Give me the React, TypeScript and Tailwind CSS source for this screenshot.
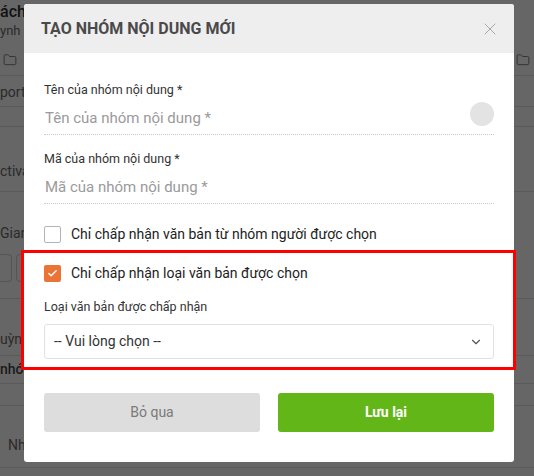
import { ChevronDown, Folder, X, Check } from "lucide-react";

const font = { fontFamily: "Roboto, 'Noto Sans', sans-serif" };

function Backdrop() {
  // dimmed page behind the modal
  return (
    <div className="flex h-[476px] w-[534px] flex-col bg-[#666666] text-[#1c1c1c]">
      <div className="h-[76px] border-b border-[#5a5a5a] pt-[2px]">
        <div className="text-[16px] font-medium leading-[20px] text-[#111]">ách l</div>
        <div className="text-[13px] leading-[18px] text-[#2a2a2a]">ynh 1</div>
        <div className="mt-[13px] flex justify-between pl-[3px] pr-[4px]">
          <Folder size={14} strokeWidth={1.5} className="text-[#2e2e2e]" />
          <Folder size={14} strokeWidth={1.5} className="text-[#2e2e2e]" />
        </div>
      </div>
      <div className="h-[31px] border-b border-[#5a5a5a] pt-[6px] text-[14px] text-[#2a2a2a]">port</div>
      <div className="h-[20px] border-b border-[#5a5a5a]" />
      <div className="h-[65px] border-b border-[#5a5a5a] pt-[34px] text-[14px] text-[#2a2a2a]">ctivat</div>
      <div className="h-[107px] border-b border-[#5a5a5a] pt-[31px]">
        <div className="text-[14px] text-[#2a2a2a]">Giang</div>
        <div className="mt-[10px] flex gap-[4px]">
          <div className="h-[28px] w-[12px] rounded-r border border-l-0 border-[#555]" />
          <div className="h-[28px] w-[20px] rounded border border-[#555]" />
        </div>
      </div>
      <div className="h-[57px] border-b border-[#5a5a5a] pt-[30px] text-[14px] text-[#2a2a2a]">uỳnh</div>
      <div className="h-[28px] border-b border-[#5a5a5a] pt-[3px] text-[14px] font-medium text-[#1a1a1a]">nhóm</div>
      <div className="h-[22px] border-b border-[#5a5a5a]" />
      <div className="h-[62px] border-b border-[#5a5a5a] pl-[8px] pt-[29px] text-[14px] text-[#2a2a2a]">Nhu</div>
    </div>
  );
}

function TextField({ label }: { label: string }) {
  return (
    <div className="flex flex-col">
      <label className="text-[12.5px] leading-[16px] text-[#333]">{label}</label>
      <div className="flex h-[37px] items-center border-b border-dotted border-[#c8c8c8] pt-[4px]">
        <input
          placeholder={label}
          className="w-full bg-transparent pl-[1px] text-[15px] text-[#333] outline-none placeholder:text-[#9a9a9a]"
        />
      </div>
    </div>
  );
}

function CheckRow({ label, checked }: { label: string; checked?: boolean }) {
  return (
    <label className="flex h-[18px] items-center gap-[10px]">
      {checked ? (
        <span className="flex h-[17px] w-[17px] items-center justify-center rounded-[2px] bg-[#ea7436]">
          <Check size={11} strokeWidth={3} className="text-white" />
        </span>
      ) : (
        <span className="h-[17px] w-[17px] rounded-[2px] border border-[#b5b5b5] bg-white" />
      )}
      <span className="text-[14px] leading-[18px] text-[#222]">{label}</span>
    </label>
  );
}

export default function App() {
  return (
    <div className="relative h-[476px] w-[534px] overflow-hidden" style={font}>
      <Backdrop />

      <div className="absolute left-[24px] top-[4px] w-[490px] overflow-hidden rounded-[3px] bg-white">
        <div className="flex h-[49px] items-center justify-between bg-[#eeeeee] pl-[17px] pr-[14px]">
          <h2 className="text-[16px] font-bold text-[#4a4a4a]">TẠO NHÓM NỘI DUNG MỚI</h2>
          <X size={20} strokeWidth={1.2} className="text-[#a8a8a8]" />
        </div>

        <div className="relative flex flex-col px-[20px] pt-[29px]">
          <span className="absolute right-[20px] top-[49px] h-[24px] w-[24px] rounded-full bg-[#e3e3e3]" />
          <TextField label="Tên của nhóm nội dung *" />
          <div className="mt-[16px]">
            <TextField label="Mã của nhóm nội dung *" />
          </div>

          <div className="mt-[21px]">
            <CheckRow label="Chỉ chấp nhận văn bản từ nhóm người được chọn" />
          </div>
          <div className="mt-[21px]">
            <CheckRow label="Chỉ chấp nhận loại văn bản được chọn" checked />
          </div>

          <label className="mt-[17px] text-[12.5px] leading-[16px] text-[#333]">Loại văn bản được chấp nhận</label>
          <div className="mt-[9px] flex h-[35px] items-center justify-between rounded-[3px] border border-[#e2e2e2] pl-[9px] pr-[10px]">
            <span className="text-[14px] text-[#333]">-- Vui lòng chọn --</span>
            <ChevronDown size={14} strokeWidth={2} className="text-[#555]" />
          </div>

          <div className="mt-[34px] flex gap-[18px] pb-[30px]">
            <button className="h-[39px] flex-1 rounded-[3px] bg-[#dddddd] text-[14px] text-[#7a7a7a]">Bỏ qua</button>
            <button className="h-[39px] flex-1 rounded-[3px] bg-[#63b617] text-[14px] font-bold text-white">Lưu lại</button>
          </div>
        </div>
      </div>

      {/* annotation highlight */}
      <div className="pointer-events-none absolute left-[21px] top-[250px] h-[120px] w-[495px] border-[3px] border-[#ff0000]" />
    </div>
  );
}
